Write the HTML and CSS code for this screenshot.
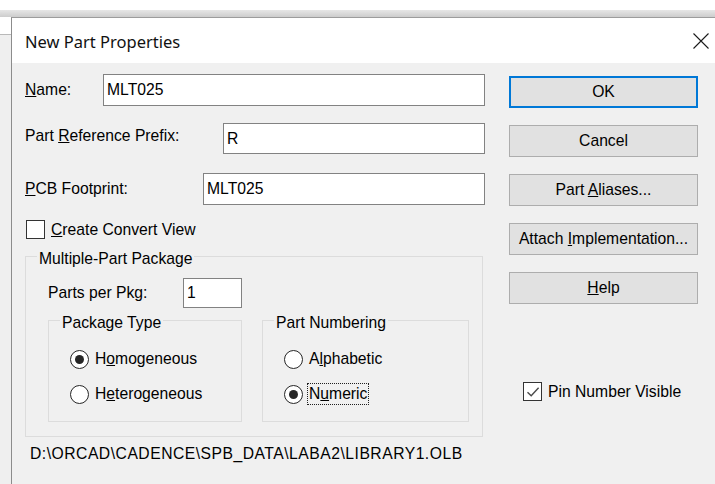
FILE: index.html
```html
<!DOCTYPE html>
<html lang="en">
<head>
<meta charset="utf-8">
<title>New Part Properties</title>
<link rel="stylesheet" href="styles.css">
</head>
<body>
<div class="screen">
  <div class="band"></div>
  <div class="desk">
    <div class="edge"></div>
    <div class="window">
      <div class="titlebar">
        <span class="title">New Part Properties</span>
        <svg class="close" width="16" height="16" viewBox="0 0 16 16" aria-label="Close">
          <path d="M0.5 0.5 L15.5 15.5 M15.5 0.5 L0.5 15.5" stroke="#1a1a1a" stroke-width="1.1" fill="none"/>
        </svg>
      </div>
      <div class="body">
        <div class="main">
          <div class="field f-name">
            <span class="lbl w-name"><u>N</u>ame:</span>
            <div class="input">MLT025</div>
          </div>
          <div class="field f-ref">
            <span class="lbl w-ref up">Part <u>R</u>eference Prefix:</span>
            <div class="input">R</div>
          </div>
          <div class="field f-pcb">
            <span class="lbl w-pcb"><u>P</u>CB Footprint:</span>
            <div class="input">MLT025</div>
          </div>
          <div class="check-row c-convert">
            <span class="box"></span>
            <span class="clabel"><u>C</u>reate Convert View</span>
          </div>

          <fieldset class="group multi">
            <legend>Multiple-Part Package</legend>
            <div class="multi-body">
              <div class="field f-parts">
                <span class="lbl w-parts">Parts per Pk<u>g</u>:</span>
                <div class="input">1</div>
              </div>
              <div class="subgroups">
                <fieldset class="group sub g-type">
                  <legend>Package Type</legend>
                  <div class="sub-body">
                    <div class="radio">
                      <span class="dot on"></span>
                      <span class="rlabel">H<u>o</u>mogeneous</span>
                    </div>
                    <div class="radio r2">
                      <span class="dot"></span>
                      <span class="rlabel">H<u>e</u>terogeneous</span>
                    </div>
                  </div>
                </fieldset>
                <fieldset class="group sub g-num">
                  <legend>Part Numbering</legend>
                  <div class="sub-body">
                    <div class="radio">
                      <span class="dot"></span>
                      <span class="rlabel">A<u>l</u>phabetic</span>
                    </div>
                    <div class="radio r2">
                      <span class="dot on"></span>
                      <span class="rlabel focus">N<u>u</u>meric</span>
                    </div>
                  </div>
                </fieldset>
              </div>
            </div>
          </fieldset>

          <div class="path">D:\ORCAD\CADENCE\SPB_DATA\LABA2\LIBRARY1.OLB</div>
        </div>

        <div class="side">
          <div class="btn default"><span>OK</span></div>
          <div class="btn"><span>Cancel</span></div>
          <div class="btn"><span>Part <u>A</u>liases...</span></div>
          <div class="btn"><span>Attach <u>I</u>mplementation...</span></div>
          <div class="btn"><span><u>H</u>elp</span></div>
          <div class="check-row c-pin">
            <span class="box">
              <svg width="16" height="16" viewBox="0 0 16 16">
                <path d="M2.5 8.2 L6.2 11.8 L13.6 3.8" stroke="#4a4a4a" stroke-width="1.4" fill="none"/>
              </svg>
            </span>
            <span class="clabel">Pin Number Visible</span>
          </div>
        </div>
      </div>
    </div>
  </div>
</div>
</body>
</html>
```

FILE: styles.css
```css
html, body {
  margin: 0;
  padding: 0;
  background: #ffffff;
}

.screen {
  width: 715px;
  height: 484px;
  overflow: hidden;
  background: #ffffff;
  font-family: "Liberation Sans", Arial, sans-serif;
  font-size: 15.7px;
  color: #000;
}

/* strip of the window behind the dialog */
.band {
  margin-top: 10px;
  height: 7px;
  background: linear-gradient(#e6e6e6, #cdcdcd);
}

.desk {
  display: flex;
  height: 467px;
}

.edge {
  width: 11px;
  flex: none;
  background: linear-gradient(to bottom, #ffffff 0 17px, #b9b9b9 17px 18px, #efefef 18px);
}

.window {
  flex: 1;
  border-top: 1px solid #9c9c9c;
  border-left: 1px solid #8c8c8c;
  background: #f0f0f0;
}

/* title bar */
.titlebar {
  height: 45px;
  background: #ffffff;
  display: flex;
  align-items: center;
  justify-content: space-between;
  padding: 1px 6px 0 13px;
  box-sizing: border-box;
}

.title {
  font-family: "Noto Sans", "Open Sans", sans-serif;
  font-size: 16.5px;
  color: #111;
}

.close {
  display: block;
  margin-top: 0;
}

/* dialog body */
.body {
  display: flex;
  padding-left: 13px;
}

.main {
  width: 460px;
  flex: none;
}

.side {
  width: 189px;
  margin-left: 24px;
  flex: none;
  padding-top: 13px;
}

.field {
  display: flex;
  align-items: center;
}

.lbl {
  flex: none;
  white-space: nowrap;
}

.lbl.up {
  margin-bottom: 5px;
}

.w-name { width: 78px; }
.w-ref { width: 198px; }
.w-pcb { width: 178px; }
.w-parts { width: 135px; }

.input {
  flex: 1;
  align-self: stretch;
  box-sizing: border-box;
  background: #ffffff;
  border: 1px solid #828282;
  padding-left: 3px;
  display: flex;
  align-items: center;
  white-space: nowrap;
}

.f-name { margin-top: 11px; height: 32px; }
.f-ref { margin-top: 17px; height: 31px; }
.f-pcb { margin-top: 19px; height: 32px; }

.f-parts {
  margin-top: 10px;
  height: 30px;
}

.f-parts .input {
  flex: none;
  width: 59px;
}

/* check boxes */
.check-row {
  display: flex;
  align-items: center;
  height: 19px;
}

.box {
  width: 19px;
  height: 19px;
  box-sizing: border-box;
  border: 1px solid #333333;
  background: #ffffff;
  flex: none;
  display: flex;
  align-items: center;
  justify-content: center;
}

.box svg { display: block; }

.clabel {
  white-space: nowrap;
}

.c-convert {
  margin-top: 15px;
  padding-left: 1px;
}

.c-convert .clabel { margin-left: 6px; }

.c-pin {
  margin-top: 78px;
  padding-left: 14px;
}

.c-pin .clabel { margin-left: 6px; }

/* group boxes */
.group {
  margin: 0;
  padding: 0;
  border: 1px solid #dcdcdc;
  min-width: 0;
}

.group legend {
  margin-left: 11px;
  padding: 5px 2px 0;
  line-height: 18px;
  white-space: nowrap;
}

.multi {
  margin-top: 6px;
  width: 458px;
  box-sizing: border-box;
}

.multi-body {
  padding: 0 0 14px 22px;
}

.subgroups {
  display: flex;
  gap: 20px;
  margin-top: 1px;
}

.g-type { width: 194px; box-sizing: border-box; }
.g-num { width: 207px; box-sizing: border-box; }

.sub-body {
  padding: 16px 0 16px 21px;
}

/* radio buttons */
.radio {
  display: flex;
  align-items: center;
  height: 22px;
}

.radio.r2 { margin-top: 13px; }

.dot {
  width: 19px;
  height: 19px;
  box-sizing: border-box;
  border: 1px solid #262626;
  border-radius: 50%;
  background: #ffffff;
  flex: none;
  display: flex;
  align-items: center;
  justify-content: center;
}

.dot.on::after {
  content: "";
  width: 9px;
  height: 9px;
  border-radius: 50%;
  background: #262626;
}

.rlabel {
  margin-left: 4px;
  padding: 0 1px;
  border: 1px dotted transparent;
  line-height: 20px;
  white-space: nowrap;
}

.rlabel.focus {
  border-color: #202020;
}

.path {
  margin-top: 8px;
  padding-left: 5px;
  line-height: 18px;
  letter-spacing: 0.5px;
  white-space: nowrap;
}

/* push buttons */
.btn {
  height: 32px;
  box-sizing: border-box;
  border: 1px solid #adadad;
  background: #e1e1e1;
  display: flex;
  align-items: center;
  justify-content: center;
  white-space: nowrap;
  margin-bottom: 17px;
}

.btn.default {
  border: 2px solid #0078d7;
}
```
